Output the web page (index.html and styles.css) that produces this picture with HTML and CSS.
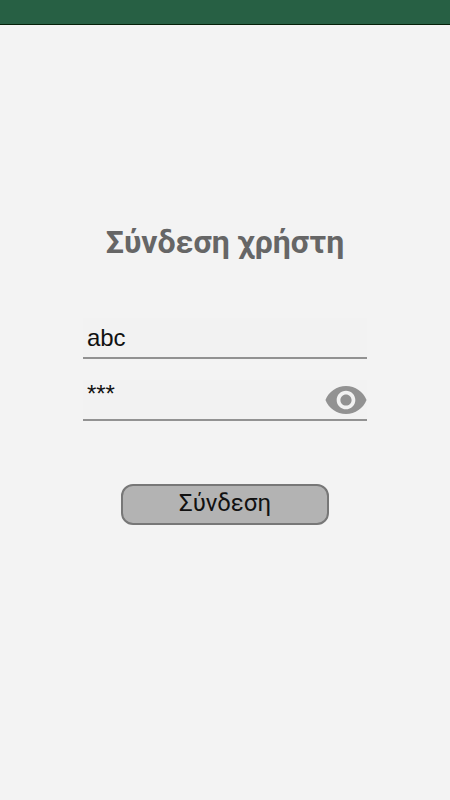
FILE: index.html
```
<!DOCTYPE html>
<html lang="el">
<head>
    <meta charset="UTF-8">
    <meta name="viewport" content="width=device-width, initial-scale=1.0">
    <title>Σύνδεση χρήστη</title>
    <link rel="stylesheet" href="styles.css">
</head>
<body>
    <header class="status-bar"></header>
    <main class="container">
        <h1 class="title">Σύνδεση χρήστη</h1>
        <form class="login-form">
            <div class="field">
                <input class="field-input" type="text" name="username" value="abc" aria-label="Όνομα χρήστη">
            </div>
            <div class="field field-password">
                <input class="field-input" type="text" name="password" value="***" autocomplete="off" aria-label="Κωδικός">
                <button class="toggle" type="button" aria-label="Εμφάνιση κωδικού">
                    <svg class="eye" viewBox="1 4.5 22 15">
                        <path fill-rule="evenodd" d="M12 4.5C7 4.5 2.73 7.61 1 12c1.73 4.39 6 7.5 11 7.5s9.27-3.11 11-7.5c-1.73-4.39-6-7.5-11-7.5zM12 17c-2.76 0-5-2.24-5-5s2.24-5 5-5 5 2.24 5 5-2.24 5-5 5zm0-8c-1.66 0-3 1.34-3 3s1.34 3 3 3 3-1.34 3-3-1.34-3-3-3z"/>
                    </svg>
                </button>
            </div>
            <button class="submit" type="submit">Σύνδεση</button>
        </form>
    </main>
</body>
</html>
```
FILE: styles.css
```
* {
    box-sizing: border-box;
}
body {
    margin: 0;
    min-height: 100vh;
    background-color: #f3f3f3;
    font-family: "Liberation Sans", Arial, sans-serif;
}
.status-bar {
    height: 25px;
    background-color: #276044;
    border-bottom: 1px solid #042008;
}
.container {
    display: flex;
    flex-direction: column;
    align-items: center;
    padding: 197px 16px 40px;
}
.title {
    margin: 0;
    font-family: Roboto, "Noto Sans", sans-serif;
    font-size: 32px;
    font-weight: 700;
    line-height: 40px;
    color: #666;
}
.login-form {
    display: flex;
    flex-direction: column;
    align-items: center;
    width: 68%;
    margin-top: 56px;
}
/* underlined text fields */
.field {
    display: flex;
    align-items: center;
    width: 100%;
    height: 41px;
    background-color: #f2f2f2;
    border-bottom: 2px solid #929292;
}
.field-password {
    margin-top: 21px;
}
.field-input {
    flex: 1;
    min-width: 0;
    height: 100%;
    padding: 0 4px;
    border: none;
    outline: none;
    background: none;
    font-family: inherit;
    font-size: 24px;
    color: #111;
}
.field-password .field-input {
    padding-bottom: 12px;
}
.toggle {
    display: flex;
    padding: 0;
    border: none;
    background: none;
    cursor: pointer;
}
.eye {
    width: 42px;
    height: 28px;
    fill: #929292;
}
.submit {
    width: 73%;
    height: 41px;
    margin-top: 63px;
    padding: 0 0 4px;
    border: 2px solid #777;
    border-radius: 12px;
    background-color: #b3b3b3;
    font-family: Roboto, "Noto Sans", sans-serif;
    font-size: 24px;
    font-weight: 400;
    line-height: 32px;
    color: #111;
    cursor: pointer;
}
```
